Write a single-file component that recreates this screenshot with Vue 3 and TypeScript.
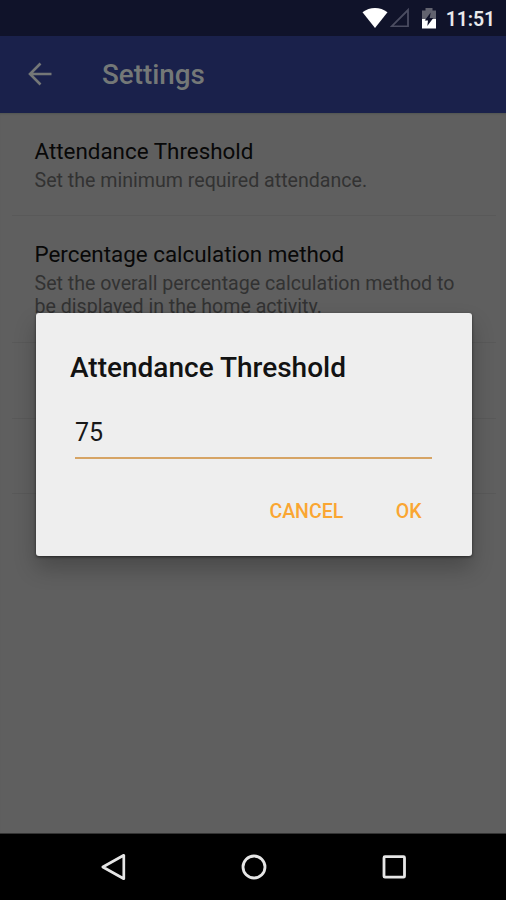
<script setup lang="ts">
import { ref } from 'vue'

interface Preference {
  title: string
  summary: string
  size: string
}

const preferences: Preference[] = [
  { title: 'Attendance Threshold', summary: 'Set the minimum required attendance.', size: 'single' },
  {
    title: 'Percentage calculation method',
    summary: 'Set the overall percentage calculation method to be displayed in the home activity.',
    size: 'double',
  },
  { title: '', summary: '', size: 'short' },
  { title: '', summary: '', size: 'short' },
]

const threshold = ref('75')
</script>

<template>
  <div class="screen">
    <header class="status">
      <svg class="wifi" width="26" height="22" viewBox="0 0 26 22">
        <path d="M0.500 5.200C7.700-.500 18.300-.500 25.500 5.200L13 21Z" fill="#fff" />
      </svg>
      <svg class="signal" width="20" height="20" viewBox="0 0 20 20">
        <path d="M18 3V19.500H1.500Z" fill="none" stroke="#4b4d61" stroke-width="1.800" />
      </svg>
      <svg class="battery" width="16" height="22" viewBox="0 0 16 22">
        <path d="M1 2.500H4.500V0H11.500V2.500H15V11H1Z" fill="#62636f" />
        <path d="M1 11H15V20.500H1Z" fill="#fff" />
        <path d="M9.700 4.500L3.700 12.500H7L6.300 18L12.300 10H8.700Z" fill="#10132a" />
      </svg>
      <span class="clock">11:51</span>
    </header>
    <div class="appbar">
      <svg class="back" width="24" height="24" viewBox="0 0 24 24">
        <path d="M23.500 12H2.500M12.500 1.500L2 12L12.500 22.500" fill="none" stroke="#747777" stroke-width="2.600" />
      </svg>
      <h1>Settings</h1>
    </div>
    <main class="list">
      <section v-for="(item, i) in preferences" :key="i" class="preference" :class="item.size">
        <h2>{{ item.title }}</h2>
        <p>{{ item.summary }}</p>
      </section>
    </main>
    <nav class="navbar">
      <svg width="28" height="28" viewBox="0 0 28 28">
        <path d="M2.800 14L23.800 2.300V25.700Z" fill="none" stroke="#e6e6e6" stroke-width="2.700" stroke-linejoin="round" />
      </svg>
      <svg width="28" height="28" viewBox="0 0 28 28">
        <circle cx="14" cy="14" r="11" fill="none" stroke="#e6e6e6" stroke-width="2.800" />
      </svg>
      <svg width="28" height="28" viewBox="0 0 28 28">
        <rect x="4" y="3.700" width="20.500" height="20.500" rx="1" fill="none" stroke="#e6e6e6" stroke-width="2.800" />
      </svg>
    </nav>
    <div class="dialog" role="dialog">
      <h3>Attendance Threshold</h3>
      <input v-model="threshold" type="text" />
      <div class="actions">
        <button class="cancel">CANCEL</button>
        <button class="ok">OK</button>
      </div>
    </div>
  </div>
</template>

<style>
body {
  margin: 0;
}
</style>

<style scoped>
.screen {
  position: relative;
  display: flex;
  flex-direction: column;
  width: 506px;
  height: 900px;
  overflow: hidden;
  background: #5f5f5f;
  font-family: Roboto, sans-serif;
}
svg {
  display: block;
  flex: none;
}
h1,
h2,
h3,
p {
  margin: 0;
  white-space: nowrap;
}
.status {
  display: flex;
  align-items: flex-start;
  justify-content: flex-end;
  box-sizing: border-box;
  height: 36px;
  padding: 7px 11px 0 0;
  background: #10132a;
}
.signal {
  margin-left: 2px;
}
.battery {
  margin: 1px 0 0 11px;
}
.clock {
  margin: 1px 0 0 9px;
  color: #e9e9eb;
  font-size: 19.500px;
  font-weight: 600;
  line-height: 24px;
  letter-spacing: -0.1px;
}
.appbar {
  display: flex;
  align-items: center;
  box-sizing: border-box;
  height: 77px;
  padding: 0 0 2px 28px;
  background: #1a214b;
}
h1 {
  margin: 2px 0 0 50px;
  color: #747877;
  font-size: 27.800px;
  font-weight: 500;
  line-height: 36px;
}
.list {
  flex: 1;
  padding: 0 10px 0 12px;
  box-shadow: inset 0 2px 2px -1px #515451;
}
.preference {
  box-sizing: border-box;
  padding: 24px 0 0 22.500px;
  border-bottom: 1px solid #595959;
}
.single {
  height: 103px;
}
.double {
  height: 127px;
}
.short {
  height: 75.500px;
}
h2 {
  color: #080808;
  font-size: 22.400px;
  font-weight: 400;
  line-height: 28px;
}
p {
  width: 440px;
  margin-top: 5px;
  color: #323232;
  font-size: 19.600px;
  line-height: 22.500px;
  white-space: normal;
}
.navbar {
  display: flex;
  align-items: center;
  justify-content: space-between;
  box-sizing: border-box;
  height: 67px;
  padding: 0 98px 0 100px;
  border-top: 1px solid #343434;
  background: #000;
}
.dialog {
  position: absolute;
  top: 313px;
  left: 35.500px;
  display: flex;
  flex-direction: column;
  box-sizing: border-box;
  width: 436px;
  height: 243px;
  padding: 37px 39.500px 0;
  border-radius: 3px;
  background: #eee;
  box-shadow: 0 1px 3px rgba(0, 0, 0, 0.55), 0 12px 22px rgba(0, 0, 0, 0.24);
}
h3 {
  margin-left: -5px;
  color: #121212;
  font-size: 28px;
  font-weight: 500;
  line-height: 36px;
}
input {
  box-sizing: border-box;
  width: 357px;
  height: 46px;
  margin-top: 27px;
  padding: 1px 0 7px;
  border: 0;
  border-bottom: 2px solid #d6a465;
  border-radius: 0;
  outline: 0;
  background: transparent;
  color: #181818;
  font: 400 25px Roboto, sans-serif;
}
.actions {
  display: flex;
  justify-content: flex-end;
  margin-top: 39px;
  padding-right: 10.500px;
}
button {
  padding: 0;
  border: 0;
  background: none;
  color: #faa632;
  font: 500 19.500px/28px Roboto, sans-serif;
}
.ok {
  margin-left: 52.500px;
}
</style>
